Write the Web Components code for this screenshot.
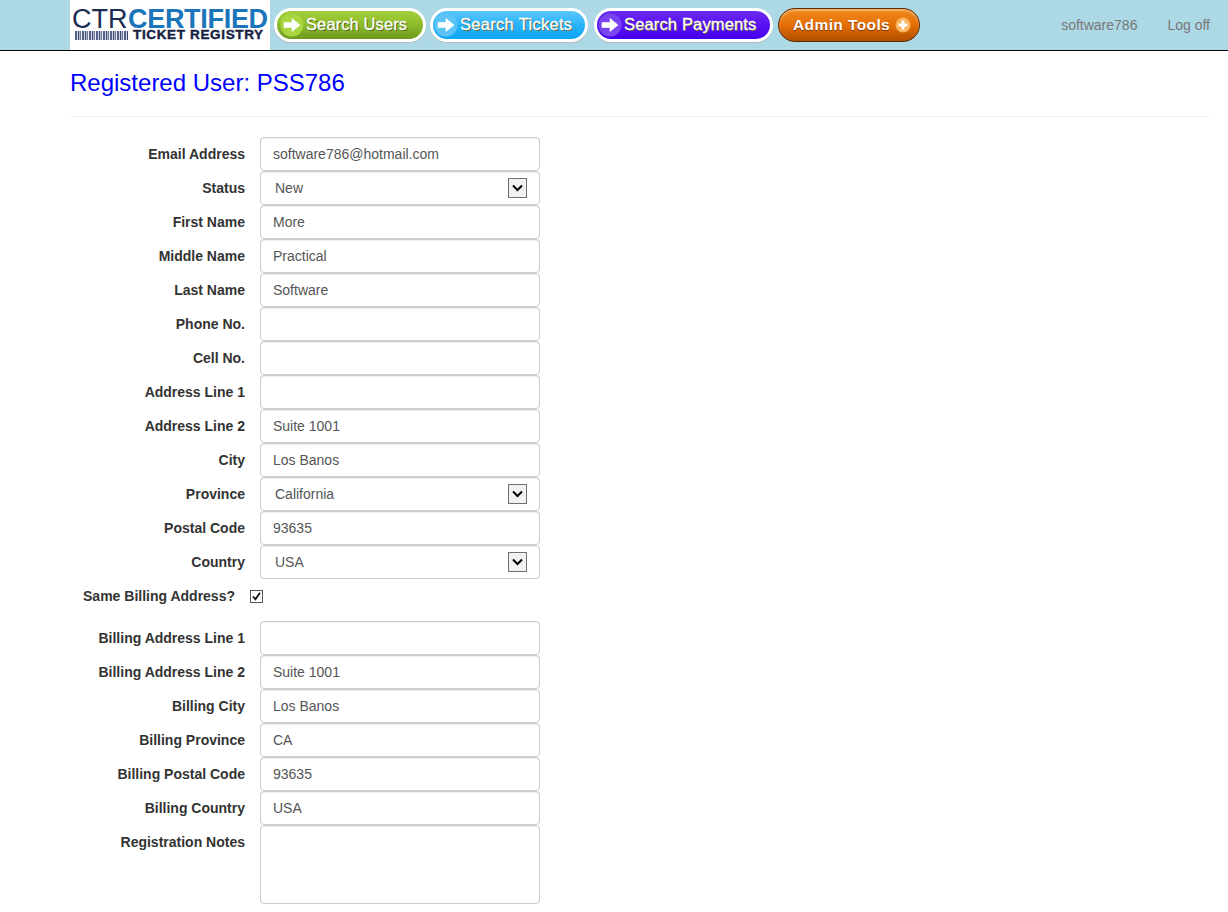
<!DOCTYPE html>
<html>
<head>
<meta charset="utf-8">
<title>Registered User</title>
<style>
html,body{margin:0;padding:0;background:#fff;}
body{font-family:"Liberation Sans",Arial,sans-serif;font-size:14px;color:#333;}
</style>
</head>
<body>
<app-header>
  <ctr-logo></ctr-logo>
  <nav-pill tone="green" icon="arrow">Search Users</nav-pill>
  <nav-pill tone="blue" icon="arrow">Search Tickets</nav-pill>
  <nav-pill tone="purple" icon="arrow">Search Payments</nav-pill>
  <nav-pill tone="orange" icon="plus">Admin Tools</nav-pill>
  <span slot="user">software786</span>
  <span slot="user">Log off</span>
</app-header>
<page-body>
  <span slot="title">Registered User: PSS786</span>
  <form-row label="Email Address">software786@hotmail.com</form-row>
  <form-row label="Status" type="select">New</form-row>
  <form-row label="First Name">More</form-row>
  <form-row label="Middle Name">Practical</form-row>
  <form-row label="Last Name">Software</form-row>
  <form-row label="Phone No."></form-row>
  <form-row label="Cell No."></form-row>
  <form-row label="Address Line 1"></form-row>
  <form-row label="Address Line 2">Suite 1001</form-row>
  <form-row label="City">Los Banos</form-row>
  <form-row label="Province" type="select">California</form-row>
  <form-row label="Postal Code">93635</form-row>
  <form-row label="Country" type="select">USA</form-row>
  <check-row label="Same Billing Address?"></check-row>
  <form-row label="Billing Address Line 1"></form-row>
  <form-row label="Billing Address Line 2">Suite 1001</form-row>
  <form-row label="Billing City">Los Banos</form-row>
  <form-row label="Billing Province">CA</form-row>
  <form-row label="Billing Postal Code">93635</form-row>
  <form-row label="Billing Country">USA</form-row>
  <form-row label="Registration Notes" type="textarea"></form-row>
</page-body>
<script>
class AppHeader extends HTMLElement{
  constructor(){
    super();
    this.attachShadow({mode:'open'}).innerHTML=`
    <style>
    :host{display:flex;box-sizing:border-box;height:51px;padding:0 18px 0 70px;background:#add8e6;border-bottom:1px solid #000;}
    .nav{display:flex;}
    .user{display:flex;gap:30px;margin-left:auto;align-items:center;color:#777;font-size:14px;height:50px;}
    </style>
    <div class="nav"><slot></slot></div>
    <div class="user"><slot name="user"></slot></div>`;
  }
}
customElements.define('app-header',AppHeader);

class CtrLogo extends HTMLElement{
  constructor(){
    super();
    this.attachShadow({mode:'open'}).innerHTML=`
    <style>
    :host{display:block;width:200px;height:50px;margin-right:4px;background:#fff;overflow:hidden;font-family:"Liberation Sans",Arial,sans-serif;}
    .top{display:flex;height:21px;padding:9px 0 0 2px;font-size:27px;line-height:21px;white-space:nowrap;}
    .ctr{flex:none;width:56px;color:#1c2c55;}
    .cert{color:#1b75bb;font-weight:700;letter-spacing:-.3px;}
    .bottom{display:flex;align-items:center;height:10px;padding-left:5px;}
    .bars{flex:none;width:53px;height:9px;margin-right:5px;background:repeating-linear-gradient(90deg,#56618a 0 2px,#d5d8e2 2px 3px,#3d4970 3px 4px,#b4b9cb 4px 5px,#6d7798 5px 6px,#eceef3 6px 7px);}
    .tr{color:#14213f;font-weight:700;font-size:13.5px;letter-spacing:.65px;line-height:10px;white-space:nowrap;-webkit-text-stroke:.4px #14213f;}
    </style>
    <div class="top"><span class="ctr">CTR</span><span class="cert">CERTIFIED</span></div>
    <div class="bottom"><div class="bars"></div><span class="tr">TICKET REGISTRY</span></div>`;
  }
}
customElements.define('ctr-logo',CtrLogo);

const pillTones={
  green:{a:'#a5cf3c',b:'#6d9a1c',c:'#8cbb2a',i:'#a9d63f',w:152,m:4,s:'#4d5a12',o:3,l:.1},
  blue:{a:'#5cc6fb',b:'#0ba6f5',c:'#29b3fa',i:'#5cc3f7',w:158,m:6,s:'#5a5a20',o:1,l:.3},
  purple:{a:'#6a2cf0',b:'#4400ee',c:'#5a10f2',i:'#7a44f0',w:179,m:5,s:'#5a5a20',o:1,l:.15},
  orange:{a:'#f08a1c',b:'#b04e00',c:'#e56f06',i:'',w:142,m:0,s:'#7a3300',o:0,l:.4}
};
class NavPill extends HTMLElement{
  constructor(){
    super();
    const t=pillTones[this.getAttribute('tone')];
    const plus=this.getAttribute('icon')=='plus';
    const icon=plus
      ? `<svg width="16" height="16" viewBox="0 0 16 16"><circle cx="8" cy="8" r="7.5" fill="#f9b45e"/><path d="M8 3.5v9M3.5 8h9" stroke="#fff" stroke-width="3"/></svg>`
      : `<svg width="24" height="24" viewBox="0 0 24 24"><circle cx="12" cy="12" r="11.5" fill="${t.i}"/><path d="M4 9.5h8V5.5l8 6.5-8 6.5v-4H4z" fill="#fff" stroke="#fff" stroke-width=".6"/></svg>`;
    this.attachShadow({mode:'open'}).innerHTML=`
    <style>
    :host{display:block;margin:8px ${t.m}px 0 0;height:34px;}
    .pill{box-sizing:border-box;display:flex;align-items:center;width:${t.w}px;height:34px;border-radius:17px;white-space:nowrap;
      background:linear-gradient(180deg,${t.a} 0%,${t.c} 50%,${t.b} 100%);
      border:3px solid #fff;box-shadow:0 1px 1px #b9b9b9;padding:0 0 0 ${t.o}px;gap:2px;
      color:#fff;font-size:16.5px;letter-spacing:${t.l}px;-webkit-text-stroke:.3px #fff;text-shadow:1px 1px 0 ${t.s};}
    .text{margin-bottom:2px;}
    .plus{border:1px solid #5a2a00;padding:0 0 0 14px;box-shadow:inset 0 2px 2px rgba(255,255,255,.35);gap:5px;
      font-size:15.5px;font-weight:700;-webkit-text-stroke:0;text-shadow:0 1px 1px #7a3300;}
    .plus .text{margin-bottom:0;}
    svg{flex:none;}
    </style>
    <div class="pill ${plus?'plus':''}">${plus?'<span class="text"><slot></slot></span>'+icon:icon+'<span class="text"><slot></slot></span>'}</div>`;
  }
}
customElements.define('nav-pill',NavPill);

class PageBody extends HTMLElement{
  constructor(){
    super();
    this.attachShadow({mode:'open'}).innerHTML=`
    <style>
    :host{display:block;padding:0 18px 0 70px;}
    h2{margin:0;padding-top:17px;height:48px;font-size:24px;line-height:30px;font-weight:400;color:#00f;box-sizing:content-box;}
    hr{margin:0 0 20px;border:0;border-top:1px solid #eee;}
    </style>
    <h2><slot name="title"></slot></h2>
    <hr>
    <slot></slot>`;
  }
}
customElements.define('page-body',PageBody);

class FormRow extends HTMLElement{
  constructor(){
    super();
    const type=this.getAttribute('type')||'text';
    const arrow=type=='select'
      ? `<svg class="arrow" width="19" height="20" viewBox="0 0 19 20"><rect x=".5" y=".5" width="18" height="19" fill="#f1f1f1" stroke="#707070"/><path d="M5 7.5l4.5 4.5 4.5-4.5" fill="none" stroke="#000" stroke-width="2"/></svg>`
      : '';
    this.attachShadow({mode:'open'}).innerHTML=`
    <style>
    :host{display:flex;gap:15px;font-size:14px;line-height:20px;}
    label{flex:none;width:175px;padding-top:7px;text-align:right;font-weight:700;color:#333;}
    .field{box-sizing:border-box;display:flex;align-items:center;width:280px;height:34px;padding:0 12px;border:1px solid #ccc;border-radius:4px;background:#fff;color:#555;box-shadow:inset 0 1px 1px rgba(0,0,0,.075);}
    .select{padding-left:14px;}
    .arrow{margin-left:auto;}
    .textarea{height:79px;}
    </style>
    <label>${this.getAttribute('label')}</label>
    <div class="field ${type}"><slot></slot>${arrow}</div>`;
  }
}
customElements.define('form-row',FormRow);

class CheckRow extends HTMLElement{
  constructor(){
    super();
    this.attachShadow({mode:'open'}).innerHTML=`
    <style>
    :host{display:flex;align-items:flex-start;gap:15px;height:42px;font-size:14px;line-height:20px;}
    label{flex:none;width:165px;padding-top:7px;text-align:right;font-weight:700;color:#333;}
    svg{margin-top:11px;}
    </style>
    <label>${this.getAttribute('label')}</label>
    <svg width="13" height="13" viewBox="0 0 13 13"><rect x=".5" y=".5" width="12" height="12" fill="#fff" stroke="#555"/><path d="M3 6.5l2.4 2.8L10 2.8" fill="none" stroke="#111" stroke-width="1.8"/></svg>`;
  }
}
customElements.define('check-row',CheckRow);
</script>
</body>
</html>
